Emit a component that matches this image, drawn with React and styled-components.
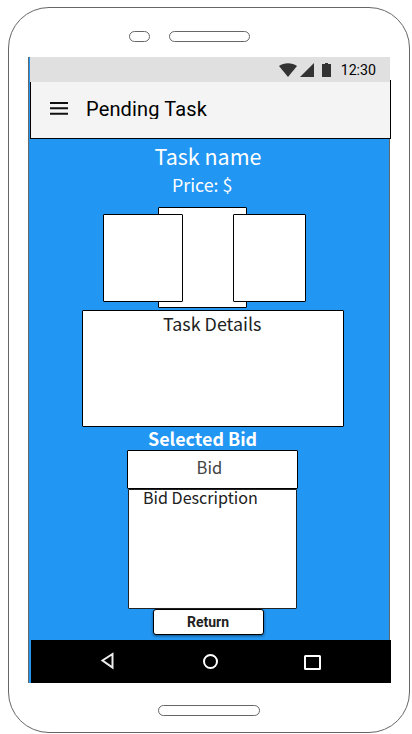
import React from "react";
import styled, { createGlobalStyle } from "styled-components";

const GlobalStyle = createGlobalStyle`
  *, *::before, *::after { box-sizing: border-box; }
  html, body { margin: 0; background: #fff; overflow: hidden; }
`;

const source = `"Noto Sans CJK JP", "Noto Sans CJK SC", "Noto Sans", sans-serif`;

const Page = styled.main`
  height: 734px;
  padding: 7px 0 0 8px;
`;

const Phone = styled.div`
  width: 402px;
  height: 726px;
  border: 1px solid #666;
  border-radius: 41px;
  display: flex;
  flex-direction: column;
  font-family: Roboto, sans-serif;
`;

const Earpiece = styled.div`
  display: flex;
  gap: 19px;
  height: 49px;
  padding: 23px 0 0 120px;
`;

const Pill = styled.div`
  width: ${(p) => p.$width}px;
  height: 11px;
  flex: none;
  border: 1px solid #666;
  border-radius: 6px;
`;

const Chin = styled.div`
  padding: 22px 0 0 149px;
`;

const Screen = styled.div`
  width: 362px;
  height: 626px;
  margin-left: 19px;
  border: solid #666;
  border-width: 0 1px;
  background: #2196f3;
  display: flex;
  flex-direction: column;
`;

const StatusBar = styled.header`
  position: relative;
  z-index: 1;
  width: 360px;
  height: 25px;
  flex: none;
  margin-left: 1px;
  padding: 0 14px 0 249px;
  background: #e0e0e0;
  display: flex;
  align-items: center;

  svg { flex: none; }
`;

const Clock = styled.time`
  margin-left: auto;
  font-size: 14.2px;
  line-height: 26px;
  white-space: nowrap;
  color: #000;
`;

const AppBar = styled.div`
  width: 361px;
  height: 59px;
  flex: none;
  margin: -2px 0 0 1px;
  padding: 0 0 0 19px;
  border: 1px solid #000;
  border-top: 0;
  background: #f4f4f4;
  display: flex;
  align-items: flex-start;
`;

const MenuButton = styled.button`
  width: 18px;
  height: 15px;
  margin: 21px 18px 0 0;
  padding: 0;
  border: 0;
  background: none;
  display: flex;
`;

const Title = styled.h1`
  height: 23px;
  margin: 16px 0 0;
  overflow: hidden;
  font-size: 20px;
  font-weight: 400;
  line-height: 26px;
  letter-spacing: 0.14px;
  white-space: nowrap;
  color: #000;
`;

const Content = styled.section`
  flex: 1;
  min-height: 0;
  display: flex;
  flex-direction: column;
  align-items: flex-start;
  font-family: ${source};
`;

const Label = styled.div`
  height: ${(p) => p.$height}px;
  margin-left: ${(p) => p.$left}px;
  font-size: ${(p) => p.$size}px;
  font-weight: ${(p) => p.$weight || 400};
  line-height: ${(p) => p.$height}px;
  color: ${(p) => p.$color || "#fff"};
  white-space: nowrap;
`;

const Gallery = styled.div`
  display: flex;
  align-items: flex-start;
  height: 101px;
  margin: 12px 0 0 74px;
`;

const Photo = styled.div`
  position: relative;
  width: ${(p) => p.$width}px;
  height: 88px;
  margin-top: 7px;
  border: 1px solid #000;
  border-radius: 1px;
  background: #fff;
`;

const FeaturedPhoto = styled(Photo)`
  z-index: 0;
  height: 101px;
  margin: 0 -14px 0 -25px;
`;

const SidePhoto = styled(Photo)`
  z-index: 1;
`;

const Panel = styled.div`
  width: ${(p) => p.$width}px;
  height: ${(p) => p.$height}px;
  flex: none;
  margin: ${(p) => p.$top || 0}px 0 0 ${(p) => p.$left}px;
  border: 1px solid ${(p) => p.$line || "#000"};
  border-radius: 1px;
  background: #fff;
`;

const ReturnButton = styled.button`
  width: 111px;
  height: 26px;
  margin-left: 124px;
  padding: 0 1px 0 0;
  border: 1px solid #000;
  border-radius: 3px;
  background: #fff;
  box-shadow: 0 1px 3px rgba(0, 0, 0, 0.5);
  font: 700 14px/22px Roboto, sans-serif;
  color: #212121;
`;

const NavBar = styled.nav`
  width: 360px;
  height: 43px;
  flex: none;
  margin-left: 2px;
  padding: 1px 70px 0 69px;
  background: #000;
  display: flex;
  align-items: center;
  justify-content: space-between;
`;

const StatusIcons = () => (
  <svg width="54" height="16" viewBox="0 0 54 16" fill="#333">
    <path d="M0 4C5.2.2 12.8.2 18 4L9 15Z" />
    <path d="M35 1V15H21Z" />
    <path d="M43 2h3V1h3v1h3v13h-9Z" />
  </svg>
);

export default function App() {
  return (
    <Page>
      <GlobalStyle />
      <Phone>
        <Earpiece>
          <Pill $width={21} />
          <Pill $width={81} />
        </Earpiece>
        <Screen>
          <StatusBar>
            <StatusIcons />
            <Clock>12:30</Clock>
          </StatusBar>
          <AppBar>
            <MenuButton aria-label="Menu">
              <svg width="18" height="15" viewBox="0 0 18 15" fill="#111">
                <path d="M0 1h18v2H0zM0 6.2h18v2H0zM0 11.7h18v2H0z" />
              </svg>
            </MenuButton>
            <Title>Pending Task</Title>
          </AppBar>
          <Content>
            <Label $height={34} $left={125.5} $size={21.5}>Task name</Label>
            <Label $height={22} $left={143} $size={17.8}>Price: $</Label>
            <Gallery>
              <SidePhoto $width={80} />
              <FeaturedPhoto $width={89} />
              <SidePhoto $width={73} />
            </Gallery>
            <Panel $width={262} $height={117} $left={53} $top={2}>
              <Label $height={24} $left={80} $size={17.9} $color="#212121">Task Details</Label>
            </Panel>
            <Label $height={23} $left={119} $size={17.9} $weight={700}>Selected Bid</Label>
            <Panel $width={171} $height={39} $left={98}>
              <Label $height={32} $left={68.5} $size={16.6} $color="#444">Bid</Label>
            </Panel>
            <Panel $width={169} $height={120} $left={99} $line="#222">
              <Label $height={14} $left={14} $size={16.1} $color="#212121">Bid Description</Label>
            </Panel>
            <ReturnButton>Return</ReturnButton>
          </Content>
          <NavBar>
            <svg width="16" height="20" viewBox="0 0 16 20" fill="none" stroke="#eee" strokeWidth="2">
              <path d="M12.5 2V15.5L2.5 8.5Z" />
            </svg>
            <svg width="16" height="16" viewBox="0 0 16 16" fill="none" stroke="#fff" strokeWidth="2">
              <circle cx="8.5" cy="7.5" r="6.5" />
            </svg>
            <svg width="18" height="16" viewBox="0 0 18 16" fill="none" stroke="#fff" strokeWidth="2">
              <rect x="2" y="2" width="15" height="13" rx="0.5" />
            </svg>
          </NavBar>
        </Screen>
        <Chin>
          <Pill $width={102} />
        </Chin>
      </Phone>
    </Page>
  );
}
